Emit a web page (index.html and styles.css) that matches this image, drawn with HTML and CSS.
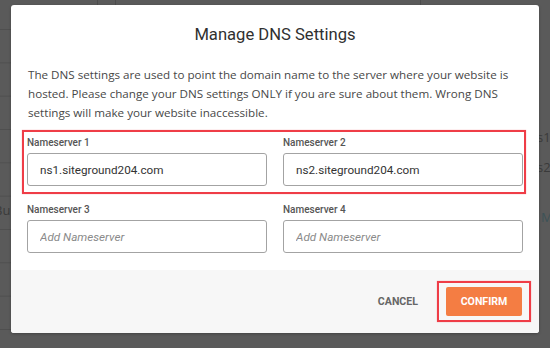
FILE: index.html
```html
<!DOCTYPE html>
<html lang="en">
<head>
<meta charset="utf-8">
<title>Manage DNS Settings</title>
<link rel="stylesheet" href="styles.css">
</head>
<body>
<div class="backdrop">
  <div class="bg-rows"></div>
  <span class="bg-vline v1"></span>
  <span class="bg-vline v2"></span>
  <span class="bg-vline v3"></span>
  <span class="bg-frag bu">Bu</span>
  <span class="bg-frag s1">s1</span>
  <span class="bg-frag s2">s2</span>
  <span class="bg-frag mm">M</span>
</div>

<div class="modal">
  <h1 class="title">Manage DNS Settings</h1>
  <p class="intro">The DNS settings are used to point the domain name to the server where your website is<br>hosted. Please change your DNS settings ONLY if you are sure about them. Wrong DNS<br>settings will make your website inaccessible.</p>

  <div class="row row-highlight">
    <div class="field">
      <label class="label" for="ns1">Nameserver 1</label>
      <input class="input" id="ns1" type="text" value="ns1.siteground204.com">
    </div>
    <div class="field">
      <label class="label" for="ns2">Nameserver 2</label>
      <input class="input" id="ns2" type="text" value="ns2.siteground204.com">
    </div>
  </div>

  <div class="row row-second">
    <div class="field">
      <label class="label" for="ns3">Nameserver 3</label>
      <input class="input" id="ns3" type="text" placeholder="Add Nameserver">
    </div>
    <div class="field">
      <label class="label" for="ns4">Nameserver 4</label>
      <input class="input" id="ns4" type="text" placeholder="Add Nameserver">
    </div>
  </div>

  <div class="footer">
    <button class="btn btn-cancel" type="button">CANCEL</button>
    <button class="btn btn-confirm" type="button">CONFIRM</button>
  </div>
</div>
</body>
</html>
```

FILE: styles.css
```css
* { box-sizing: border-box; }

html, body {
  margin: 0;
  padding: 0;
  width: 550px;
  height: 348px;
  overflow: hidden;
}

body {
  background: #5a5a5a;
  font-family: Roboto, "Liberation Sans", sans-serif;
  position: relative;
}

/* underlying page seen through the overlay */
.backdrop {
  position: absolute;
  inset: 0;
  overflow: hidden;
}

.bg-rows {
  position: absolute;
  left: 0;
  top: 0;
  width: 12px;
  height: 348px;
  background-image: linear-gradient(to bottom, transparent 0, transparent 32.3px, #4f4f4f 32.3px, #4f4f4f 33.33px);
  background-size: 100% 33.33px;
  background-position: 0 -3.33px;
}

.bg-vline {
  position: absolute;
  top: 0;
  width: 1px;
  height: 6px;
  background: #4c4c4c;
}
.v1 { left: 97px; }
.v2 { left: 115px; }
.v3 { left: 420px; }

.bg-frag {
  position: absolute;
  font-family: "Open Sans", sans-serif;
  font-size: 13px;
  line-height: 16px;
  color: #3a3a3a;
}
.bu { left: -6px; top: 202px; }
.s1 { left: 537px; top: 129px; }
.s2 { left: 537px; top: 159px; }
.mm { left: 541px; top: 209px; color: #3c5257; }

/* modal */
.modal {
  position: absolute;
  left: 11px;
  top: 5px;
  width: 528px;
  height: 328px;
  background: #ffffff;
  border-radius: 3px;
  box-shadow: 0 1px 3px rgba(0, 0, 0, 0.25);
  overflow: hidden;
  display: flex;
  flex-direction: column;
}

.title {
  margin: 20px 0 0;
  font-size: 16.6px;
  line-height: 20px;
  font-weight: 400;
  color: #303030;
  text-align: center;
}

.intro {
  margin: 20px 0 0;
  padding: 0 17px;
  font-family: "Open Sans", sans-serif;
  font-size: 11.65px;
  line-height: 19px;
  color: #474747;
  white-space: nowrap;
}

.row {
  position: relative;
  display: grid;
  grid-template-columns: 240px 240px;
  column-gap: 16px;
  padding: 0 17px 0 16px;
}

.row-highlight { margin-top: 14px; }
.row-second { margin-top: 17px; }

.row-highlight::after {
  content: "";
  position: absolute;
  left: 11px;
  right: 13px;
  top: -6px;
  bottom: -8px;
  border: 2px solid #ef3d47;
  box-shadow: 0 0 1px rgba(239, 61, 71, 0.5);
  pointer-events: none;
}

.field {
  display: flex;
  flex-direction: column;
  gap: 3px;
}

.label {
  font-size: 10px;
  line-height: 14px;
  font-weight: 500;
  color: #555555;
}

.input {
  height: 33px;
  width: 100%;
  border: 1px solid #a3a3a3;
  border-radius: 3px;
  padding: 0 12px;
  font-family: Roboto, "Liberation Sans", sans-serif;
  font-size: 11.7px;
  color: #333333;
  background: #fff;
  outline: none;
}

.input::placeholder {
  font-style: italic;
  color: #8a8a8a;
  opacity: 1;
}

.footer {
  margin-top: 17px;
  flex: 1;
  background: #f7f7f7;
  display: flex;
  justify-content: flex-end;
  align-items: center;
  gap: 28px;
  padding: 0 17px;
}

.btn {
  font-family: Roboto, "Liberation Sans", sans-serif;
  font-size: 10.6px;
  font-weight: 700;
  border: none;
  cursor: pointer;
  padding: 0;
}

.btn-cancel {
  background: transparent;
  color: #666666;
}

.btn-confirm {
  position: relative;
  width: 76px;
  height: 29px;
  background: #f47d43;
  color: #ffffff;
  border-radius: 2px;
}

.btn-confirm::after {
  content: "";
  position: absolute;
  inset: -6px -9px;
  border: 2px solid #ef3d47;
  box-shadow: 0 0 1px rgba(239, 61, 71, 0.5);
  pointer-events: none;
}
```
